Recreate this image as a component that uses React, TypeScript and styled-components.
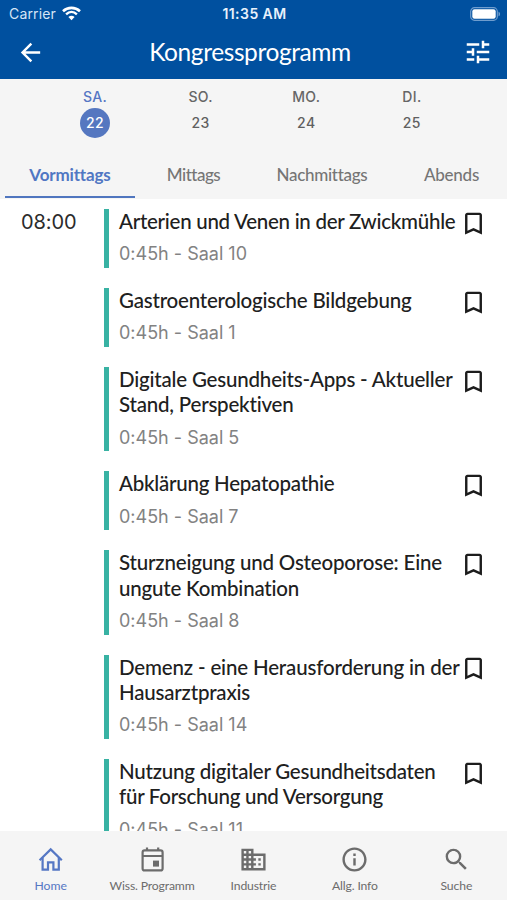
import React from "react";
import styled, { createGlobalStyle } from "styled-components";
import {
  MdArrowBack,
  MdTune,
  MdBookmarkBorder,
  MdDomain,
  MdInfoOutline,
  MdSearch,
} from "react-icons/md";

const GlobalStyle = createGlobalStyle`
  *, *::before, *::after { box-sizing: border-box; }
  body { margin: 0; background: #fff; }
`;

const humanist = `Lato, "Open Sans", sans-serif`;
const system = `Inter, "Liberation Sans", sans-serif`;

const Screen = styled.div`
  width: 507px;
  height: 900px;
  display: flex;
  flex-direction: column;
  overflow: hidden;
  background: #fff;
  font-family: ${system};
  font-variant-ligatures: none;
  white-space: nowrap;
`;

const Header = styled.header`
  flex: none;
  height: 79px;
  background: #00509f;
  color: #fff;
`;

const StatusBar = styled.div`
  height: 26px;
  display: grid;
  grid-template-columns: 1fr auto 1fr;
  align-items: center;
  padding: 1px 6px 0 9px;
  font-size: 14px;
`;

const Carrier = styled.div`
  display: flex;
  align-items: center;
  gap: 6px;
  color: #d6e5f6;
  letter-spacing: 0.15px;
`;

const Clock = styled.div`
  padding-right: 1px;
  font-size: 14px;
  font-weight: 600;
  letter-spacing: 0.45px;
  color: #e8f1fb;
`;

const BatteryHolder = styled.div`
  display: flex;
  justify-content: flex-end;
`;

const NavBar = styled.div`
  height: 52px;
  display: grid;
  grid-template-columns: 40px 1fr 40px;
  align-items: center;
  padding: 0 9px 0 10px;
`;

const IconButton = styled.button<{ $size: number }>`
  display: flex;
  align-items: center;
  justify-content: center;
  padding: 0;
  border: 0;
  background: none;
  color: inherit;
  svg {
    width: ${(p) => p.$size}px;
    height: ${(p) => p.$size}px;
  }
`;

const Title = styled.h1<{ $tracking: number }>`
  margin: 0;
  padding-right: 8px;
  text-align: center;
  font: 400 24.5px/34px ${humanist};
  letter-spacing: ${(p) => p.$tracking}px;
`;

const Filters = styled.div`
  flex: none;
  height: 120px;
  background: #f5f5f5;
`;

const Days = styled.div`
  height: 72px;
  display: grid;
  grid-template-columns: repeat(4, 105.6px);
  justify-content: center;
`;

const Day = styled.button<{ $active?: boolean }>`
  display: flex;
  flex-direction: column;
  align-items: center;
  gap: 2px;
  padding: 9px 0 0;
  border: 0;
  background: none;
  font: 500 14px/18px ${system};
  letter-spacing: 0.4px;
  color: ${(p) => (p.$active ? "#5577c4" : "#666")};
`;

const DayNumber = styled.span<{ $active?: boolean }>`
  width: 30px;
  height: 30px;
  border-radius: 50%;
  display: grid;
  place-items: center;
  background: ${(p) => (p.$active ? "#5577c0" : "transparent")};
  color: ${(p) => (p.$active ? "#fff" : "#606060")};
`;

const Tabs = styled.div`
  height: 47px;
  display: grid;
  grid-template-columns: 130px 117px 140px 119px;
  padding-left: 5px;
`;

const Tab = styled.button<{ $active?: boolean; $tracking: number }>`
  padding: 3px 0 0;
  border: 0;
  border-bottom: 2px solid ${(p) => (p.$active ? "#5076bf" : "transparent")};
  background: none;
  font: ${(p) => (p.$active ? 700 : 500)} 17px/42px ${humanist};
  letter-spacing: ${(p) => p.$tracking}px;
  color: ${(p) => (p.$active ? "#5077c3" : "#757575")};
`;

const Programme = styled.main`
  flex: 1;
  min-height: 0;
  overflow: hidden;
  display: grid;
  grid-template-columns: 104px 1fr;
  padding-top: 10px;
`;

const Time = styled.time`
  padding-left: 21px;
  font-size: 20px;
  line-height: 26px;
  letter-spacing: -0.1px;
  color: #2b2b2b;
`;

const Sessions = styled.div`
  display: flex;
  flex-direction: column;
  gap: 20px;
`;

const Session = styled.article<{ $height: number }>`
  flex: none;
  height: ${(p) => p.$height}px;
  display: grid;
  grid-template-columns: 339px 30px;
  padding-left: 10px;
  border-left: 5px solid #38b2a3;
`;

const SessionTitle = styled.h2`
  margin: 0;
  font: 500 20.5px/25.3px ${humanist};
  color: #202020;
`;

const Line = styled.span<{ $tracking: number }>`
  display: block;
  letter-spacing: ${(p) => p.$tracking}px;
`;

const Place = styled.p`
  margin: 7px 0 0;
  font-size: 18px;
  line-height: 25px;
  color: #828282;
`;

const Bookmark = styled(IconButton)`
  width: 30px;
  height: 28px;
  color: #1c1c1c;
`;

const BottomBar = styled.nav`
  flex: none;
  height: 69px;
  display: grid;
  grid-template-columns: repeat(5, 1fr);
  background: #f5f5f5;
`;

const BottomItem = styled.button<{ $active?: boolean; $tracking: number }>`
  display: flex;
  flex-direction: column;
  align-items: center;
  gap: 4px;
  padding: 14px 0 0;
  border: 0;
  background: none;
  font: 400 12.2px/16px ${humanist};
  letter-spacing: ${(p) => p.$tracking}px;
  color: ${(p) => (p.$active ? "#5577c4" : "#6c6c6c")};
  svg {
    width: 29px;
    height: 29px;
  }
`;

const Wifi = () => (
  <svg width="19" height="15" viewBox="0 0 19 15" fill="none" stroke="#fff">
    <path d="M1 5.2C5.8 0.7 13.2 0.7 18 5.2" strokeWidth="2.6" />
    <path d="M4.1 8.3C7.3 5.3 11.7 5.3 14.9 8.3" strokeWidth="2.4" />
    <path d="M9.5 14.2L6.4 10.9C8.2 9.3 10.8 9.3 12.6 10.9Z" fill="#fff" stroke="none" />
  </svg>
);

const Battery = () => (
  <svg width="31" height="14" viewBox="0 0 31 14">
    <rect x="0.7" y="0.7" width="26.6" height="12.6" rx="3.8" fill="none" stroke="#6f9dce" strokeWidth="1.2" />
    <rect x="2.3" y="2.3" width="23.4" height="9.4" rx="2.2" fill="#fff" />
    <path d="M28.5 4.7C30.6 5.4 30.6 8.6 28.5 9.3Z" fill="#6f9dce" />
  </svg>
);

const HomeIcon = () => (
  <svg viewBox="0 0 29 29" fill="none" stroke="currentColor" strokeWidth="2.2">
    <path d="M3.6 15.2L14.7 4.4L25.8 15.2" />
    <path d="M6.6 12.8V24.6H12V17.4H17.4V24.6H22.8V12.8" />
  </svg>
);

const CalendarIcon = () => (
  <svg viewBox="0 0 29 29" fill="none" stroke="currentColor" strokeWidth="2.2">
    <rect x="4.6" y="5.4" width="20" height="20" rx="2" />
    <path d="M4.6 11H24.6M9 2.6V6M20.2 2.6V6" />
    <rect x="15" y="15.6" width="6" height="6" fill="currentColor" stroke="none" />
  </svg>
);

const days = [
  ["SA.", "22"],
  ["SO.", "23"],
  ["MO.", "24"],
  ["DI.", "25"],
];

const tabs: [string, number][] = [
  ["Vormittags", -0.15],
  ["Mittags", -0.5],
  ["Nachmittags", -0.3],
  ["Abends", -0.25],
];

type SessionData = { lines: [string, number][]; place: string; height: number };

const sessions: SessionData[] = [
  { lines: [["Arterien und Venen in der Zwickmühle", -0.27]], place: "Saal 10", height: 59 },
  { lines: [["Gastroenterologische Bildgebung", -0.21]], place: "Saal 1", height: 59 },
  { lines: [["Digitale Gesundheits-Apps - Aktueller", -0.19], ["Stand, Perspektiven", -0.2]], place: "Saal 5", height: 84.4 },
  { lines: [["Abklärung Hepatopathie", -0.24]], place: "Saal 7", height: 59 },
  { lines: [["Sturzneigung und Osteoporose: Eine", -0.18], ["ungute Kombination", -0.2]], place: "Saal 8", height: 84.4 },
  { lines: [["Demenz - eine Herausforderung in der", -0.16], ["Hausarztpraxis", -0.2]], place: "Saal 14", height: 84.4 },
  { lines: [["Nutzung digitaler Gesundheitsdaten", -0.23], ["für Forschung und Versorgung", -0.27]], place: "Saal 11", height: 84.4 },
];

const sections: { label: string; Icon: React.ComponentType; tracking: number }[] = [
  { label: "Home", Icon: HomeIcon, tracking: 0 },
  { label: "Wiss. Programm", Icon: CalendarIcon, tracking: -0.15 },
  { label: "Industrie", Icon: MdDomain, tracking: -0.15 },
  { label: "Allg. Info", Icon: MdInfoOutline, tracking: -0.15 },
  { label: "Suche", Icon: MdSearch, tracking: -0.1 },
];

export default function App() {
  return (
    <Screen>
      <GlobalStyle />
      <Header>
        <StatusBar>
          <Carrier>
            Carrier <Wifi />
          </Carrier>
          <Clock>11:35 AM</Clock>
          <BatteryHolder>
            <Battery />
          </BatteryHolder>
        </StatusBar>
        <NavBar>
          <IconButton $size={29} aria-label="Zurück">
            <MdArrowBack />
          </IconButton>
          <Title $tracking={-0.4}>Kongressprogramm</Title>
          <IconButton $size={30} aria-label="Filter">
            <MdTune />
          </IconButton>
        </NavBar>
      </Header>
      <Filters>
        <Days>
          {days.map(([name, number], i) => (
            <Day key={name} $active={i === 0}>
              {name}
              <DayNumber $active={i === 0}>{number}</DayNumber>
            </Day>
          ))}
        </Days>
        <Tabs>
          {tabs.map(([label, tracking], i) => (
            <Tab key={label} $active={i === 0} $tracking={tracking}>
              {label}
            </Tab>
          ))}
        </Tabs>
      </Filters>
      <Programme>
        <Time>08:00</Time>
        <Sessions>
          {sessions.map(({ lines, place, height }) => (
            <Session key={lines[0][0]} $height={height}>
              <div>
                <SessionTitle>
                  {lines.map(([text, tracking]) => (
                    <Line key={text} $tracking={tracking}>
                      {text}
                    </Line>
                  ))}
                </SessionTitle>
                <Place>0:45h - {place}</Place>
              </div>
              <Bookmark $size={29} aria-label="Merken">
                <MdBookmarkBorder />
              </Bookmark>
            </Session>
          ))}
        </Sessions>
      </Programme>
      <BottomBar>
        {sections.map(({ label, Icon, tracking }, i) => (
          <BottomItem key={label} $active={i === 0} $tracking={tracking}>
            <Icon />
            {label}
          </BottomItem>
        ))}
      </BottomBar>
    </Screen>
  );
}
